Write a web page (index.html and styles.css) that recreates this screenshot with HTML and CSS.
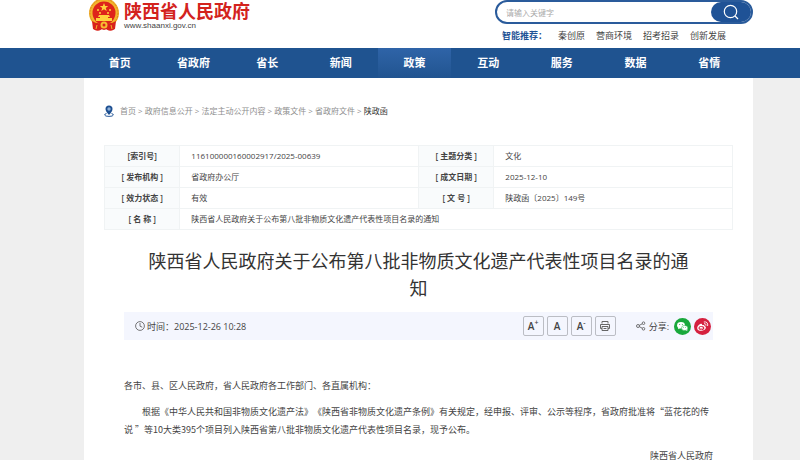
FILE: index.html
```html
<!DOCTYPE html>
<html lang="zh-CN">
<head>
<meta charset="utf-8">
<title>陕西省人民政府</title>
<link rel="stylesheet" href="styles.css">
</head>
<body>
<header class="top">
  <a class="brand" href="#">
    <svg class="emblem" viewBox="0 0 32 32" aria-hidden="true">
      <path d="M5 20h22l-1 9q-4 3-7 0l-3 1-3-1q-3 3-7 0z" fill="#d9231b"/>
      <circle cx="16" cy="13" r="15" fill="#f3b52c"/>
      <circle cx="16" cy="13" r="14" fill="none" stroke="#dc851f" stroke-dasharray="2 1"/>
      <circle cx="16" cy="13" r="11.500" fill="#de241b"/>
      <path d="M16 3l1.200 3h3l-2.400 2 .9 3-2.700-1.800-2.700 1.800.9-3-2.400-2h3z" fill="#ffd23c"/>
      <g fill="#ffd23c"><circle cx="10" cy="10" r="1"/><circle cx="22" cy="10" r="1"/><circle cx="12" cy="13" r="1"/><circle cx="20" cy="13" r="1"/>
      <path d="M11 15h10l1 2H10zM8 18h16v3H8zM12 17h8v1h-8z"/></g>
      <path d="M4 21q6 4 12 1 6 3 12-1l-1 8q-5 3-9 0h-4q-4 3-9 0z" fill="#d9231b"/>
      <circle cx="16" cy="25" r="3.500" fill="#f6bd31"/><circle cx="16" cy="25" r="1.500" fill="#d9231b"/>
      <path d="M9 25l-1 4M23 25l1 4" stroke="#f3b52c"/>
    </svg>
    <span class="brand-text"><strong>陕西省人民政府</strong><small>www.shaanxi.gov.cn</small></span>
  </a>
  <div class="tools">
    <form class="search">
      <input type="text" aria-label="搜索" placeholder="请输入关键字">
      <button type="button" aria-label="搜索"><svg viewBox="0 0 18 18" aria-hidden="true"><circle cx="8.500" cy="8.500" r="6.200"/><path d="M13 13l3 3"/></svg></button>
    </form>
    <div class="hot"><b>智能推荐：</b><a href="#">秦创原</a><a href="#">营商环境</a><a href="#">招考招录</a><a href="#">创新发展</a></div>
  </div>
</header>
<nav class="nav">
  <div class="nav-inner">
    <a href="#">首页</a><a href="#">省政府</a><a href="#">省长</a><a href="#">新闻</a><a class="active" href="#">政策</a><a href="#">互动</a><a href="#">服务</a><a href="#">数据</a><a href="#">省情</a>
  </div>
</nav>
<main class="page">
  <div class="crumbs">
    <svg viewBox="0 0 10 12" aria-hidden="true"><path d="M2.500 8.500Q.6 9 .6 10q.4 1.400 4.400 1.400T9.400 10q0-1-1.900-1.500" fill="none" stroke="#2a5c9c"/><path d="M5 10Q1.500 6.500 1.500 4a3.500 3.500 0 0 1 7 0Q8.500 6.500 5 10z" fill="#1d4f91"/><circle cx="5" cy="4" r="1.700" fill="#8fb0d8"/></svg>
    <span><a href="#">首页</a> &gt; <a href="#">政府信息公开</a> &gt; <a href="#">法定主动公开内容</a> &gt; <a href="#">政策文件</a> &gt; <a href="#">省政府文件</a> &gt; <a class="here" href="#">陕政函</a></span>
  </div>
  <table class="info">
    <colgroup><col class="c-label"><col class="c-value"><col class="c-label"><col class="c-value"></colgroup>
    <tr><th>[索引号]</th><td>116100000160002917/2025-00639</td><th>[ 主题分类 ]</th><td>文化</td></tr>
    <tr><th>[ 发布机构 ]</th><td>省政府办公厅</td><th>[ 成文日期 ]</th><td>2025-12-10</td></tr>
    <tr><th>[ 效力状态 ]</th><td>有效</td><th>[ 文 号 ]</th><td>陕政函〔2025〕149号</td></tr>
    <tr><th>[ 名 称 ]</th><td colspan="3">陕西省人民政府关于公布第八批非物质文化遗产代表性项目名录的通知</td></tr>
  </table>
  <article class="article">
    <h1>陕西省人民政府关于公布第八批非物质文化遗产代表性项目名录的通知</h1>
    <div class="meta">
      <svg class="clock" viewBox="0 0 10 10" aria-hidden="true"><circle cx="5" cy="5" r="4.400"/><path d="M5 2v3.200l2.300 1"/></svg>
      <span class="time">时间：2025-12-26 10:28</span>
      <div class="actions">
        <button type="button">A<sup>+</sup></button>
        <button type="button">A</button>
        <button type="button">A<sup>-</sup></button>
        <button type="button" aria-label="打印"><svg viewBox="0 0 12 12" aria-hidden="true"><path d="M3 3.500V1.500h6v2M3 8.500H1.500v-4h9v4H9M3 6.500h6v4H3zM4.500 8.500h3"/></svg></button>
      </div>
      <div class="share">
        <svg class="nodes" viewBox="0 0 10 10" aria-hidden="true"><circle cx="2" cy="5" r="1.500"/><circle cx="7.500" cy="2.200" r="1.300"/><circle cx="7.500" cy="7.800" r="1.300"/><path d="M3.300 4.300l3-1.500M3.300 5.700l3 1.500"/></svg>
        <span>分享:</span>
        <a href="#" aria-label="微信"><svg viewBox="0 0 17 17" aria-hidden="true"><circle cx="8.500" cy="8.500" r="8.500" fill="#19a83b"/><ellipse cx="7" cy="7.200" rx="3.900" ry="3.200" fill="#fff"/><path d="M4.500 9l-.5 2.300L6.500 10z" fill="#fff"/><ellipse cx="10.700" cy="10" rx="3.200" ry="2.600" fill="#fff" stroke="#19a83b" stroke-width=".5"/><path d="M12 12l1.300 1.300-.2-2z" fill="#fff"/><g fill="#19a83b"><circle cx="5.700" cy="6.400" r=".5"/><circle cx="8.300" cy="6.400" r=".5"/><circle cx="9.700" cy="9.500" r=".4"/><circle cx="11.700" cy="9.500" r=".4"/></g></svg></a>
        <a href="#" aria-label="微博"><svg viewBox="0 0 17 17" aria-hidden="true"><circle cx="8.500" cy="8.500" r="8.500" fill="#d5203f"/><path d="M3.200 10.200C3.200 8 6.500 5.200 7.800 6c.6.400.3 1.200.3 1.200s2.500-.9 2.400.9c1.400.4 1.500 1.300 1.300 2-.8 3.600-8.600 3.600-8.600.1z" fill="#fff"/><ellipse cx="7.400" cy="10" rx="2.900" ry="2" fill="#d5203f"/><ellipse cx="7.200" cy="10.100" rx="1.600" ry="1.300" fill="#fff"/><circle cx="7" cy="10.300" r=".6" fill="#d5203f"/><path d="M10.200 3.900c2.500-.5 4 1.300 3.500 3.700M10.400 5.700c1.200-.2 1.800.5 1.600 1.600" fill="none" stroke="#fff" stroke-width=".9" stroke-linecap="round"/></svg></a>
      </div>
    </div>
    <div class="body">
      <p>各市、县、区人民政府，省人民政府各工作部门、各直属机构：</p>
      <p class="indent">根据《中华人民共和国非物质文化遗产法》《陕西省非物质文化遗产条例》有关规定，经申报、评审、公示等程序，省政府批准将“蓝花花的传说 ”等10大类395个项目列入陕西省第八批非物质文化遗产代表性项目名录，现予公布。</p>
      <p class="sign">陕西省人民政府</p>
    </div>
  </article>
</main>
</body>
</html>
```
FILE: styles.css
```css
* { box-sizing: border-box; }
html { background: #efefef; }
body {
  margin: 0;
  font-family: "Open Sans", "Noto Sans CJK SC", sans-serif;
  font-size: 8px;
  color: #444;
  text-spacing-trim: space-all;
}
a { color: inherit; text-decoration: none; }
svg { display: block; flex: none; }
button, input { font: inherit; color: inherit; }

.top {
  display: flex;
  justify-content: space-between;
  height: 48px;
  padding: 0 47px 0 88px;
  background: #fff;
}
.brand { display: flex; gap: 4px; align-items: flex-start; }
.emblem { width: 32px; height: 32px; }
.brand-text { display: flex; flex-direction: column; }
.brand-text strong {
  font: 700 18px/20px "Noto Sans CJK SC", sans-serif;
  color: #d3231d;
}
.brand-text small { font: 8px/12px "Liberation Sans", sans-serif; color: #444; }
.tools { width: 258px; }
.search {
  display: flex;
  height: 24px;
  border: 2px solid #2a5b9b;
  border-radius: 12px;
  background: #fff;
}
.search input {
  flex: 1;
  min-width: 0;
  padding: 0 9px;
  border: 0;
  background: none;
  outline: 0;
}
.search input::placeholder { color: #aaa; }
.search button {
  display: grid;
  place-items: center;
  width: 40px;
  padding: 0;
  border: 0;
  border-radius: 10px;
  background: #1f5296;
}
.search svg { width: 18px; height: 18px; fill: none; stroke: #fff; stroke-width: 1.2; }
.hot {
  display: flex;
  gap: 11px;
  padding: 4px 7px 0;
  font-size: 9px;
  line-height: 16px;
  white-space: nowrap;
}
.hot b { color: #1f5296; }

.nav { background: #1f5390; }
.nav-inner {
  display: grid;
  grid-template-columns: repeat(9, 1fr);
  margin: 0 54px 0 83px;
}
.nav a {
  font-size: 11px;
  font-weight: 700;
  line-height: 30px;
  text-align: center;
  color: #fff;
}
.nav .active { background: linear-gradient(#2f64a8, #215490); }

.page {
  margin: 0 47px 0 84px;
  padding: 27px 20px 0;
  background: #fff;
}
.crumbs {
  display: flex;
  align-items: center;
  gap: 6px;
  height: 12px;
  line-height: 12px;
  color: #8e8e8e;
}
.crumbs svg { width: 10px; height: 12px; }
.crumbs .here { color: #333; }

.info {
  width: 100%;
  margin-top: 28px;
  border-collapse: collapse;
  table-layout: fixed;
}
.c-label { width: 12%; }
.c-value { width: 38%; }
.info th, .info td {
  height: 21px;
  padding: 0 11px;
  border: 1px solid #f0f3f4;
  line-height: 20px;
  text-align: left;
}
.info th { padding: 0; background: #f9fbfc; font-weight: 600; text-align: center; white-space: nowrap; }

.article { padding: 0 20px; }
h1 {
  margin: 18px 0 10px;
  padding: 0 20px;
  font-size: 18px;
  font-weight: 400;
  line-height: 27px;
  text-align: center;
  color: #333;
}
.meta {
  display: flex;
  align-items: center;
  height: 28px;
  padding: 0 2px 0 11px;
  background: #f4f6fe;
  font-size: 9px;
}
.clock, .nodes { width: 10px; height: 10px; fill: none; stroke: #555; stroke-width: .8; }
.time { margin-left: 2px; }
.actions { display: flex; gap: 3px; margin-left: auto; }
.actions button {
  display: flex;
  align-items: center;
  justify-content: center;
  width: 21px;
  height: 20px;
  padding: 0;
  border: 1px solid #bbbdc4;
  border-radius: 2px;
  background: none;
  font-size: 10px;
  font-weight: 600;
}
.actions sup { align-self: flex-start; font-size: 7px; line-height: 12px; }
.actions svg { width: 12px; height: 12px; fill: none; stroke: #666; }
.share { display: flex; align-items: center; gap: 3px; margin-left: 20px; }
.share span { margin-right: 2px; }
.share a svg { width: 17px; height: 17px; }

.body {
  padding-top: 37px;
  font-family: "Noto Sans CJK SC", sans-serif;
  font-size: 9px;
  line-height: 18px;
}
.body p { margin: 0 0 8px; }
.body .indent { text-indent: 2em; }
.body .sign { margin: 0; text-align: right; }
```
